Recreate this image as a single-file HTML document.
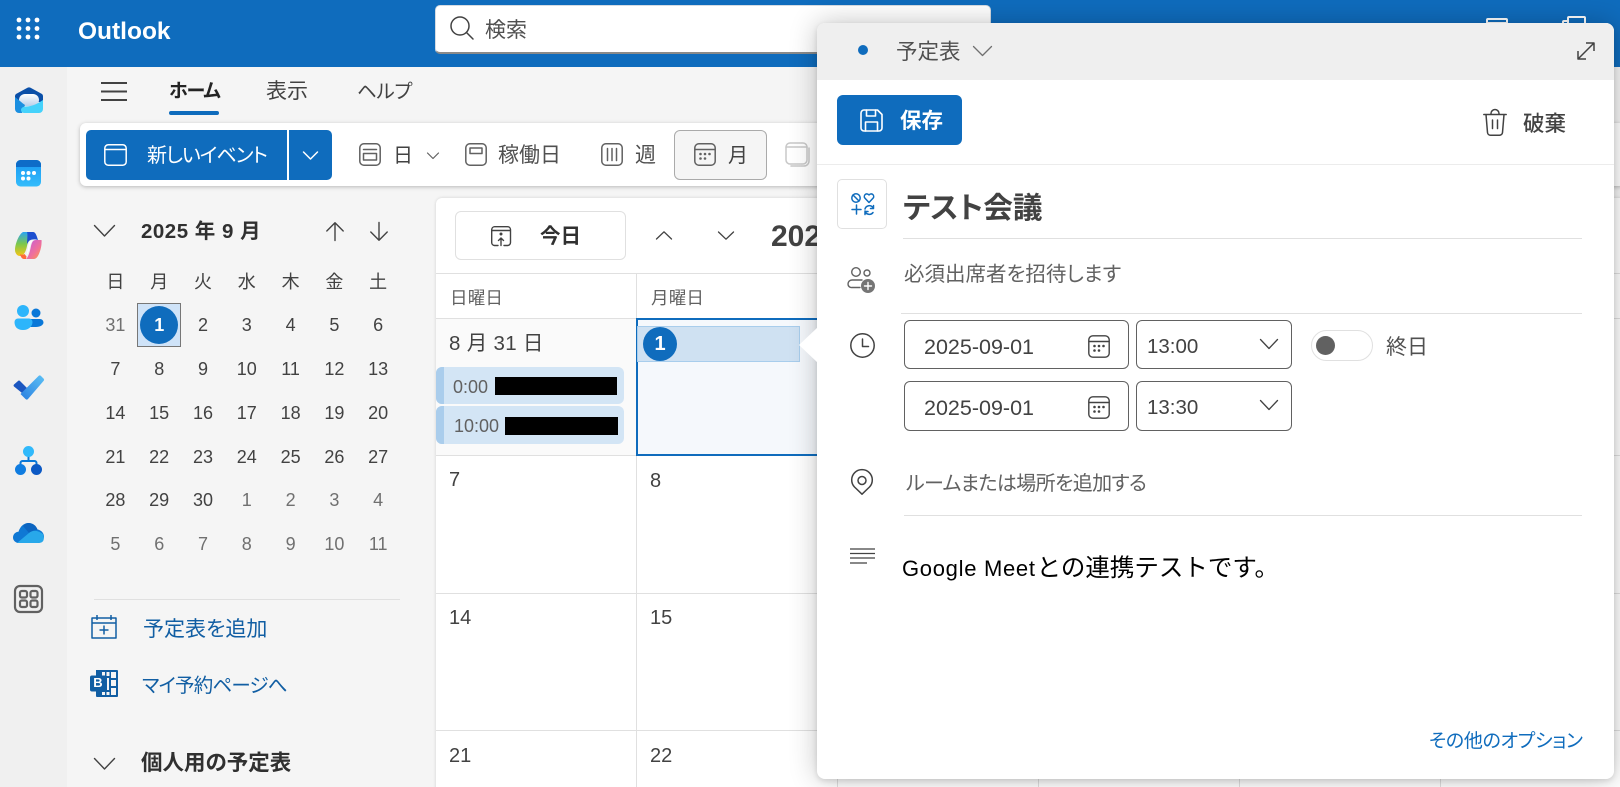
<!DOCTYPE html>
<html lang="ja">
<head>
<meta charset="utf-8">
<title>Outlook</title>
<style>
html,body{margin:0;padding:0;width:1620px;height:787px;overflow:hidden;background:#f5f5f5}
body{position:relative;font-family:"Liberation Sans","Noto Sans CJK JP",sans-serif;color:#424242;font-feature-settings:"palt"}
.a{position:absolute;box-sizing:border-box}
.t{position:absolute;white-space:nowrap;height:30px;line-height:30px}
svg{position:absolute;overflow:visible;fill:none;stroke:#424242;stroke-width:1.5;stroke-linecap:round;stroke-linejoin:round}
.g{stroke:#616161}
.w{stroke:#fff}
.n{stroke:none}
.cal{position:absolute;left:93.5px;top:260px;display:grid;grid-template-columns:repeat(7,43.8px);grid-auto-rows:43.8px;font-size:18px;color:#424242}
.cal span{display:flex;align-items:center;justify-content:center}
.cal .h{position:relative;top:-1px}
.cal .o{color:#707070}
.ln{position:absolute;background:#e0e0e0}
</style>
</head>
<body>
<!-- top bar -->
<div class="a" style="left:0;top:0;width:1620px;height:67px;background:#0f6cbd"></div>
<svg style="left:16px;top:17px" width="24" height="24" viewBox="0 0 24 24"><g fill="#fff" stroke="none"><circle cx="3" cy="3" r="2.4"/><circle cx="12" cy="3" r="2.4"/><circle cx="21" cy="3" r="2.4"/><circle cx="3" cy="11.5" r="2.4"/><circle cx="12" cy="11.5" r="2.4"/><circle cx="21" cy="11.5" r="2.4"/><circle cx="3" cy="20" r="2.4"/><circle cx="12" cy="20" r="2.4"/><circle cx="21" cy="20" r="2.4"/></g></svg>
<div class="t" style="left:78px;top:17px;font-size:24.5px;font-weight:700;color:#fff">Outlook</div>
<div class="a" style="left:435px;top:5px;width:556px;height:49px;background:#fff;border-radius:5px;border:1px solid #d5dbe2;border-bottom:2px solid #8a8a8a"></div>
<svg style="left:450px;top:16px" width="24" height="24" viewBox="0 0 24 24"><circle cx="10" cy="10" r="9"/><path d="M16.5 16.5L23 23"/></svg>
<div class="t" style="left:485px;top:16px;font-size:21px;color:#505050">検索</div>
<svg class="w" style="left:1486px;top:18px;stroke:#fff;stroke-width:2" width="22" height="10" viewBox="0 0 22 10"><path d="M1 10V2a1 1 0 0 1 1-1h18a1 1 0 0 1 1 1v8M1 5h20"/></svg>
<svg class="w" style="left:1562px;top:16px;stroke:#fff;stroke-width:2" width="24" height="10" viewBox="0 0 24 10"><path d="M6 10V2a1 1 0 0 1 1-1h15a1 1 0 0 1 1 1v8M1 10V6a1 1 0 0 1 1-1h4"/></svg>

<!-- left rail -->
<div class="a" style="left:0;top:67px;width:67px;height:720px;background:#f0f0f0"></div>
<svg style="left:14px;top:87px;stroke:none" width="30" height="26" viewBox="0 0 30 26"><defs>
<linearGradient id="pp" x1="0" y1="0" x2="0" y2="1"><stop offset="0" stop-color="#fff"/><stop offset="1" stop-color="#b9cfea"/></linearGradient>
<linearGradient id="cl" x1="0" y1="0" x2="0" y2="1"><stop offset="0" stop-color="#1a98f2"/><stop offset="1" stop-color="#34bcfb"/></linearGradient>
<linearGradient id="cp1" x1="0" y1="0" x2="0" y2="1"><stop offset="0" stop-color="#2aa4f4"/><stop offset=".5" stop-color="#7cc84a"/><stop offset="1" stop-color="#f5c518"/></linearGradient>
<linearGradient id="cp2" x1="0" y1="0" x2="1" y2="1"><stop offset="0" stop-color="#c05ae0"/><stop offset=".6" stop-color="#f0709a"/><stop offset="1" stop-color="#fba040"/></linearGradient>
<linearGradient id="td" x1="0" y1="1" x2="1" y2="0"><stop offset="0" stop-color="#2a7fe0"/><stop offset="1" stop-color="#5cc0f5"/></linearGradient>
</defs>
<path fill="#0a4fa8" d="M13 1a4 4 0 0 1 4 0L28 7a3 3 0 0 1 1 2v6H1V9a3 3 0 0 1 1-2Z"/>
<rect x="5" y="7" width="20" height="12" rx="6" fill="url(#pp)"/>
<path fill="#1b8fe0" d="M1 10C5 13 8 16 11 18L8 26H5a4 4 0 0 1-4-4Z"/>
<path fill="#45d2fb" d="M7 23c0-2 2-3.500 5-3.500 6 0 12-3 17-6.500V22a4 4 0 0 1-4 4H10a3 3 0 0 1-3-3Z"/></svg>
<svg style="left:16px;top:160px;stroke:none" width="25" height="27" viewBox="0 0 25 27"><rect width="25" height="26.500" rx="4.500" fill="url(#cl)"/><path fill="#0e6cc8" d="M4.500 0h16A4.500 4.500 0 0 1 25 4.500V7H0V4.500A4.500 4.500 0 0 1 4.500 0Z"/><g fill="#fff"><circle cx="7" cy="13" r="2"/><circle cx="12.500" cy="13" r="2"/><circle cx="18" cy="13" r="2"/><circle cx="7" cy="18.500" r="2"/><circle cx="12.500" cy="18.500" r="2"/></g></svg>
<svg style="left:15px;top:232px;stroke:none" width="27" height="27" viewBox="0 0 27 27"><path fill="url(#cp1)" d="M8 0h11l-2 1c-2 2-4 9-5 13-1 5-3 10-7 10-3 0-5-3-5-6C0 12 4 2 8 0Z"/><path fill="#1c4fd0" d="M12 0h6c2 0 3 2 4 5l1 3c-3-1-7-1-9 1l-2 3c0-4 1-9 0-12Z"/><path fill="url(#cp2)" d="M26.500 8H21c-3 0-4 2-5 6-1 5-2 9-4 12l-1 1h8c4 0 7-9 7.500-15 .1-2 .2-3 0-4Z"/><path fill="#ff6a3a" d="M5 22c1.500 1 3 1 4.500 0l2 2.500L11 27H9c-2 0-3.500-2.500-4-5Z"/><path fill="#fff" d="M15 9c-2 4-2 9-3.500 14 2.500-2 3-9 4.500-12 .5-1 1.500-2 2-3Z" opacity=".85"/></svg>
<svg style="left:14px;top:305px;stroke:none" width="30" height="25" viewBox="0 0 30 25"><circle cx="22" cy="8" r="4.500" fill="#0a78d8"/><path fill="#0a78d8" d="M14 14h12a3.500 3.500 0 0 1 3.500 3.500C29.500 20 26 22 22 22h-8Z"/><circle cx="9" cy="6" r="6" fill="#2db5fb"/><path fill="#2db5fb" d="M4 13.500h11a3.500 3.500 0 0 1 3.500 3.500c0 4-3.500 8-9.500 8S.5 21.500.5 17A3.500 3.500 0 0 1 4 13.500Z"/></svg>
<svg style="left:13px;top:375px;stroke:none" width="31" height="25" viewBox="0 0 31 25"><path fill="#1b56c0" d="M1 11.500a1.500 1.500 0 0 1 0-2L5 6a1.500 1.500 0 0 1 2 0l7 7-5 5Z"/><path fill="url(#td)" d="M12.500 24 7.500 19 25.500 1a1.800 1.800 0 0 1 2.500 0l2.500 2.500a1.800 1.800 0 0 1 0 2.500L15 24a1.800 1.800 0 0 1-2.500 0Z"/></svg>
<svg style="left:15px;top:446px;stroke:none" width="27" height="29" viewBox="0 0 27 29"><path fill="none" stroke="#0a78d8" stroke-width="2" d="M13.500 9v6M5.500 20v-3a2 2 0 0 1 2-2h12a2 2 0 0 1 2 2v3"/><circle cx="13.500" cy="5.500" r="5.500" fill="#30b9fb"/><circle cx="5.500" cy="23.500" r="5.500" fill="#0f7ce0"/><circle cx="21.500" cy="23.500" r="5.500" fill="#0c59c4"/></svg>
<svg style="left:13px;top:523px;stroke:none" width="31" height="20" viewBox="0 0 31 20"><path fill="#0f78d4" d="M6 20C2.500 20 0 17.500 0 14.500S2.300 9 5.500 8.800C7 3.500 11 0 15.500 0c4 0 7.500 2.500 9 6.500 3.500.5 6.500 3.500 6.500 7S28 20 25 20Z"/><path fill="#0c64c0" d="M10 3C11.500 1 13.500 0 15.500 0c4 0 7.500 2.500 9 6.500L20 8l-4 2Z"/><path fill="#28a8ea" d="M4 20 16 10Q22 5 30 11Q33 20 25 20Z"/></svg>
<svg style="left:14px;top:585px;stroke:#616161;stroke-width:2.200" width="29" height="28" viewBox="0 0 29 28"><rect x="1" y="1" width="27" height="26" rx="5"/><rect x="6" y="6" width="7" height="6.500" rx="1.800"/><rect x="16.500" y="6" width="7" height="6.500" rx="1.800"/><rect x="6" y="15.500" width="7" height="6.500" rx="1.800"/><rect x="16.500" y="15.500" width="7" height="6.500" rx="1.800"/></svg>

<!-- tabs -->
<svg style="left:101px;top:82px;stroke-linecap:butt;stroke-width:2" width="26" height="18" viewBox="0 0 26 18"><path d="M0 1h26M0 9.500h26M0 18h26"/></svg>
<div class="t" style="left:169px;top:77px;font-size:19px;letter-spacing:-1.200px;font-weight:700;color:#242424">ホーム</div>
<div class="a" style="left:169px;top:111px;width:50px;height:4px;border-radius:2px;background:#0f6cbd"></div>
<div class="t" style="left:266px;top:77px;font-size:21px;color:#424242">表示</div>
<div class="t" style="left:357px;top:77px;font-size:19.500px;letter-spacing:-.3px;color:#424242">ヘルプ</div>

<!-- ribbon -->
<div class="a" style="left:80px;top:123px;width:1545px;height:63px;background:#fff;border-radius:6px;box-shadow:0 1px 4px rgba(0,0,0,.25)"></div>
<div class="a" style="left:86px;top:130px;width:201px;height:50px;background:#0f6cbd;border-radius:5px 0 0 5px"></div>
<div class="a" style="left:289px;top:130px;width:43px;height:50px;background:#0f6cbd;border-radius:0 5px 5px 0"></div>
<svg class="w" style="left:104px;top:144px;stroke:#fff" width="23" height="22" viewBox="0 0 23 22"><rect x=".8" y=".8" width="21.400" height="20.400" rx="3.500"/><path d="M1 5.500h21"/></svg>
<div class="t" style="left:147px;top:141px;font-size:20px;letter-spacing:-1px;color:#fff">新しいイベント</div>
<svg style="left:303px;top:151px;stroke:#fff" width="15" height="9" viewBox="0 0 15 9"><path d="M.5 1l7 7 7-7"/></svg>
<svg class="g" style="left:359px;top:143px;stroke:#616161" width="22" height="23" viewBox="0 0 22 23"><rect x=".8" y=".8" width="20.400" height="21.400" rx="4"/><path d="M4.500 6.500h13"/><rect x="4.500" y="10.500" width="13" height="6.500"/></svg>
<div class="t" style="left:393px;top:141px;font-size:20px;color:#424242">日</div>
<svg style="left:427px;top:152px;stroke:#616161;stroke-width:1.200" width="12" height="7" viewBox="0 0 12 7"><path d="M.5 1l5.500 5.500L11.500 1"/></svg>
<svg style="left:465px;top:143px;stroke:#616161" width="22" height="23" viewBox="0 0 22 23"><rect x=".8" y=".8" width="20.400" height="21.400" rx="4"/><rect x="5" y="5" width="12" height="5.500"/></svg>
<div class="t" style="left:498px;top:141px;font-size:21px;color:#505050">稼働日</div>
<svg style="left:601px;top:143px;stroke:#616161" width="22" height="23" viewBox="0 0 22 23"><rect x=".8" y=".8" width="20.400" height="21.400" rx="4"/><path d="M6.500 5.500v12M11 5.500v12M15.500 5.500v12"/></svg>
<div class="t" style="left:635px;top:141px;font-size:21px;color:#505050">週</div>
<div class="a" style="left:674px;top:130px;width:93px;height:50px;background:#f5f5f5;border:1px solid #aaa;border-radius:6px"></div>
<svg style="left:694px;top:143px;stroke:#616161" width="22" height="23" viewBox="0 0 22 23"><rect x=".8" y=".8" width="20.400" height="21.400" rx="4"/><path d="M1 6.500h20"/><g fill="#616161" stroke="none"><circle cx="6.500" cy="11" r="1.300"/><circle cx="11" cy="11" r="1.300"/><circle cx="15.500" cy="11" r="1.300"/><circle cx="6.500" cy="15.500" r="1.300"/><circle cx="11" cy="15.500" r="1.300"/></g></svg>
<div class="t" style="left:728px;top:141px;font-size:20px;color:#424242">月</div>
<svg style="left:785px;top:142px;stroke:#c8c8c8;stroke-width:1.500" width="25" height="25" viewBox="0 0 25 25"><rect x="1" y="1" width="21" height="21" rx="4"/><path d="M1 5h21M24 6v13a5 5 0 0 1-5 5H6"/></svg>

<!-- mini calendar -->
<svg style="left:94px;top:225px;stroke-width:1.400" width="21" height="12" viewBox="0 0 21 12"><path d="M.5 .5L10.500 11 20.500 .5"/></svg>
<div class="t" style="left:141px;top:217px;font-size:20.500px;letter-spacing:.5px;font-weight:700;color:#303030">2025 年 9 月</div>
<svg style="left:326px;top:222px;stroke-width:1.400" width="18" height="19" viewBox="0 0 18 19"><path d="M9 18.500V.8M.8 9L9 .8 17.200 9"/></svg>
<svg style="left:370px;top:222px;stroke-width:1.400" width="18" height="19" viewBox="0 0 18 19"><path d="M9 .5v17.700M.8 10L9 18.200 17.200 10"/></svg>
<div class="a" style="left:137px;top:303px;width:44px;height:44px;background:#cfe3f8;border:1px solid #777"></div>
<div class="a" style="left:140px;top:306px;width:38px;height:38px;border-radius:50%;background:#0f6cbd"></div>
<div class="cal">
<span class="h">日</span><span class="h">月</span><span class="h">火</span><span class="h">水</span><span class="h">木</span><span class="h">金</span><span class="h">土</span>
<span class="o">31</span><span style="color:#fff;font-weight:700">1</span><span>2</span><span>3</span><span>4</span><span>5</span><span>6</span>
<span>7</span><span>8</span><span>9</span><span>10</span><span>11</span><span>12</span><span>13</span>
<span>14</span><span>15</span><span>16</span><span>17</span><span>18</span><span>19</span><span>20</span>
<span>21</span><span>22</span><span>23</span><span>24</span><span>25</span><span>26</span><span>27</span>
<span>28</span><span>29</span><span>30</span><span class="o">1</span><span class="o">2</span><span class="o">3</span><span class="o">4</span>
<span class="o">5</span><span class="o">6</span><span class="o">7</span><span class="o">8</span><span class="o">9</span><span class="o">10</span><span class="o">11</span>
</div>
<div class="ln" style="left:94px;top:599px;width:306px;height:1px"></div>
<svg style="left:91px;top:615px;stroke:#115ea3;stroke-linecap:butt" width="26" height="24" viewBox="0 0 26 24"><path d="M1 3h24v20H1ZM1 8h24M6 0v5M20 0v5M13 10.500v9M8.500 15h9"/></svg>
<div class="t" style="left:143px;top:615px;font-size:21px;color:#115ea3">予定表を追加</div>
<svg style="left:90px;top:670px;stroke:none" width="28" height="27" viewBox="0 0 28 27"><path fill="#115ea3" d="M7 0h20a1 1 0 0 1 1 1v25a1 1 0 0 1-1 1H7a1 1 0 0 1-1-1V0Z"/><g fill="#f5f5f5"><rect x="12" y="2" width="3" height="4"/><rect x="16.500" y="2" width="3" height="4"/><rect x="21" y="2" width="5" height="6"/><rect x="21" y="10" width="5" height="6"/><rect x="21" y="18" width="5" height="7"/><rect x="12" y="22" width="3" height="3"/><rect x="16.500" y="22" width="3" height="3"/></g><rect y="5.500" width="17" height="16" rx="2" fill="#115ea3"/><rect x="17" y="8" width="2" height="12" fill="#f5f5f5"/></svg>
<div class="t" style="left:86px;top:668px;width:24px;text-align:center;font-size:13px;line-height:30px;font-weight:700;color:#fff">B</div>
<div class="t" style="left:142px;top:671px;font-size:19.500px;letter-spacing:-.8px;color:#115ea3">マイ予約ページへ</div>
<svg style="left:94px;top:758px;stroke-width:1.400" width="21" height="12" viewBox="0 0 21 12"><path d="M.5 .5L10.500 11 20.500 .5"/></svg>
<div class="t" style="left:141px;top:748px;font-size:21.500px;font-weight:700;color:#303030">個人用の予定表</div>

<!-- calendar surface -->
<div class="a" style="left:436px;top:198px;width:1190px;height:600px;background:#fff;border-radius:6px 0 0 0;box-shadow:0 0 3px rgba(0,0,0,.15)"></div>
<div class="a" style="left:455px;top:211px;width:171px;height:49px;border:1px solid #e0e0e0;border-radius:6px;background:#fff"></div>
<svg style="left:491px;top:226px;stroke-width:1.400" width="20" height="20" viewBox="0 0 20 20"><path d="M7 19.500H3.500A3 3 0 0 1 .7 16.500V3.500A3 3 0 0 1 3.500.7h13a3 3 0 0 1 3 2.800v13a3 3 0 0 1-3 3H13M1 4.500h18M10 19.500v-7M7.500 14.500 10 12l2.500 2.500"/><circle cx="10" cy="8" r=".8" fill="#424242"/></svg>
<div class="t" style="left:540px;top:222px;font-size:20.500px;font-weight:700;color:#303030">今日</div>
<svg style="left:656px;top:231px;stroke-width:1.300" width="16" height="9" viewBox="0 0 16 9"><path d="M.5 8L8 .8 15.500 8"/></svg>
<svg style="left:718px;top:231px;stroke-width:1.300" width="16" height="9" viewBox="0 0 16 9"><path d="M.5 1L8 8.200 15.500 1"/></svg>
<div class="t" style="left:771px;top:222px;font-size:30px;font-weight:700;color:#424242">2025</div>

<div class="ln" style="left:436px;top:273px;width:1190px;height:1px"></div>
<div class="ln" style="left:436px;top:318px;width:1190px;height:1px"></div>
<div class="ln" style="left:436px;top:455px;width:1190px;height:1px"></div>
<div class="ln" style="left:436px;top:593px;width:1190px;height:1px"></div>
<div class="ln" style="left:436px;top:730px;width:1190px;height:1px"></div>
<div class="ln" style="left:636px;top:273px;width:1px;height:520px"></div>
<div class="ln" style="left:837px;top:273px;width:1px;height:520px"></div>
<div class="ln" style="left:1038px;top:273px;width:1px;height:520px"></div>
<div class="ln" style="left:1239px;top:273px;width:1px;height:520px"></div>
<div class="ln" style="left:1440px;top:273px;width:1px;height:520px"></div>
<div class="a" style="left:436px;top:319px;width:200px;height:136px;background:#fafafa"></div>
<div class="t" style="left:450px;top:283px;font-size:17.500px;color:#616161;letter-spacing:.2px">日曜日</div>
<div class="t" style="left:651px;top:283px;font-size:17.500px;color:#616161;letter-spacing:.2px">月曜日</div>
<div class="t" style="left:449px;top:329px;font-size:20.500px;letter-spacing:.3px;color:#424242">8 月 31 日</div>

<div class="a" style="left:436px;top:367px;width:188px;height:37px;background:#d3e5f5;border-radius:6px;overflow:hidden"><div class="a" style="left:0;top:0;width:8px;height:37px;background:#aacdec"></div></div>
<div class="t" style="left:453px;top:372px;font-size:18px;color:#616161">0:00</div>
<div class="a" style="left:495px;top:377px;width:122px;height:18px;background:#000"></div>
<div class="a" style="left:436px;top:406px;width:188px;height:38px;background:#d3e5f5;border-radius:6px;overflow:hidden"><div class="a" style="left:0;top:0;width:8px;height:38px;background:#aacdec"></div></div>
<div class="t" style="left:454px;top:411px;font-size:18px;color:#616161">10:00</div>
<div class="a" style="left:505px;top:417px;width:113px;height:18px;background:#000"></div>

<div class="a" style="left:636px;top:318px;width:210px;height:138px;background:#f5f8fc;border:2px solid #0f6cbd;border-right:0"></div>
<div class="a" style="left:637px;top:326px;width:163px;height:36px;background:#cfe1f2;border:1px solid #a8cdec"></div>
<div class="a" style="left:643px;top:327px;width:34px;height:34px;border-radius:50%;background:#0f6cbd"></div>
<div class="t" style="left:643px;top:329px;width:34px;text-align:center;font-size:20px;font-weight:700;color:#fff">1</div>

<div class="t" style="left:449px;top:465px;font-size:20px">7</div>
<div class="t" style="left:650px;top:466px;font-size:20px">8</div>
<div class="t" style="left:449px;top:603px;font-size:20px">14</div>
<div class="t" style="left:650px;top:603px;font-size:20px">15</div>
<div class="t" style="left:449px;top:741px;font-size:20px">21</div>
<div class="t" style="left:650px;top:741px;font-size:20px">22</div>

<!-- dialog -->
<div class="a" style="left:817px;top:23px;width:797px;height:756px;background:#fff;border-radius:8px;box-shadow:0 0 28px rgba(0,0,0,.24),0 2px 6px rgba(0,0,0,.12)"></div>
<svg style="left:799px;top:327px;stroke:none" width="19" height="36" viewBox="0 0 19 36"><path fill="#fff" d="M19 0L0 18l19 18Z"/></svg>
<div class="a" style="left:817px;top:23px;width:797px;height:57px;background:#efefef;border-radius:8px 8px 0 0"></div>
<div class="a" style="left:858px;top:45px;width:10px;height:10px;border-radius:50%;background:#0f6cbd"></div>
<div class="t" style="left:896px;top:37px;font-size:21.500px;color:#505050">予定表</div>
<svg style="left:973px;top:46px;stroke:#707070;stroke-width:1.300" width="19" height="10" viewBox="0 0 19 10"><path d="M.5 .5L9.500 9.500 18.500 .5"/></svg>
<svg style="left:1577px;top:42px;stroke-linecap:butt" width="18" height="18" viewBox="0 0 18 18"><path d="M1 17L17 1M9 1h8v8M1 9v8h8"/></svg>

<div class="a" style="left:837px;top:95px;width:125px;height:50px;background:#0f6cbd;border-radius:6px"></div>
<svg style="left:860px;top:109px;stroke:#fff;stroke-width:1.600" width="23" height="23" viewBox="0 0 23 23"><path d="M1 4a3 3 0 0 1 3-3h13.500L22 5.500V19a3 3 0 0 1-3 3H4a3 3 0 0 1-3-3Z"/><path d="M5.500 22v-9h12v9M6.500 1v6h9V1"/></svg>
<div class="t" style="left:900px;top:106px;font-size:21.500px;font-weight:700;color:#fff">保存</div>
<svg style="left:1483px;top:110px;stroke-width:1.500" width="24" height="26" viewBox="0 0 24 26"><path d="M.8 4.500h22.400M8 4.500V3.500a3.500 3.500 0 0 1 8 0v1M3 4.500l1.500 18a3 3 0 0 0 3 2.700h9a3 3 0 0 0 3-2.700l1.500-18M9.500 10v8.500M14.500 10v8.500"/></svg>
<div class="t" style="left:1523px;top:109px;font-size:21.500px;font-weight:500;color:#424242">破棄</div>
<div class="ln" style="left:817px;top:164px;width:797px;height:1px;background:#ececec"></div>

<div class="a" style="left:837px;top:179px;width:50px;height:50px;border:1px solid #e0e0e0;border-radius:5px"></div>
<svg style="left:851px;top:193px;stroke:#0f6cbd;stroke-width:1.500" width="24" height="23" viewBox="0 0 24 23"><circle cx="5" cy="5" r="4.200"/><path d="M2 2l6 6M1 16.500h9M5.500 12v9M18 9.500l-4.200-4.500a2.500 2.500 0 0 1 4.200-3 2.500 2.500 0 0 1 4.200 3ZM14 16a4.500 4.500 0 0 1 7.500-2l1 1M14 18a4.500 4.500 0 0 0 8 1.500M22.500 12.500v3h-3M14 21.500v-3h3"/></svg>
<div class="t" style="left:903px;top:194px;font-size:29.700px;font-weight:700;color:#424242">テスト会議</div>
<div class="ln" style="left:903px;top:238px;width:679px;height:1px"></div>

<svg style="left:847px;top:267px;stroke:#616161;stroke-width:1.400" width="28" height="26" viewBox="0 0 28 26"><circle cx="9" cy="5" r="4.300"/><circle cx="20" cy="6" r="3"/><path d="M15 13H5a4 4 0 0 0-4 4 3.500 3.500 0 0 0 4 3.500h8"/><circle cx="21" cy="19" r="7" fill="#757575" stroke="none"/><path stroke="#fff" d="M21 15.500v7M17.500 19h7"/></svg>
<div class="t" style="left:904px;top:260px;font-size:20.500px;color:#616161">必須出席者を招待します</div>
<div class="ln" style="left:901px;top:313px;width:681px;height:1px"></div>

<svg style="left:850px;top:333px" width="25" height="25" viewBox="0 0 25 25"><circle cx="12.500" cy="12.500" r="11.700"/><path d="M12.500 6v7.500h6"/></svg>
<div class="a" style="left:904px;top:320px;width:225px;height:49px;border:1px solid #616161;border-radius:6px"></div>
<div class="t" style="left:924px;top:332px;font-size:21.500px;color:#424242">2025-09-01</div>
<svg style="left:1088px;top:335px;stroke-width:1.400" width="22" height="23" viewBox="0 0 22 23"><rect x=".8" y=".8" width="20.400" height="21.400" rx="4"/><path d="M1 6.500h20"/><g fill="#424242" stroke="none"><circle cx="6.500" cy="11" r="1.300"/><circle cx="11" cy="11" r="1.300"/><circle cx="15.500" cy="11" r="1.300"/><circle cx="6.500" cy="15.500" r="1.300"/><circle cx="11" cy="15.500" r="1.300"/></g></svg>
<div class="a" style="left:1136px;top:320px;width:156px;height:49px;border:1px solid #616161;border-radius:6px"></div>
<div class="t" style="left:1147px;top:332px;font-size:20.500px;color:#424242">13:00</div>
<svg style="left:1260px;top:339px;stroke-width:1.300" width="18" height="10" viewBox="0 0 18 10"><path d="M.5 .5L9 9.500 17.500 .5"/></svg>
<div class="a" style="left:1311px;top:330px;width:62px;height:31px;border:1px solid #e0e0e0;border-radius:16px"></div>
<div class="a" style="left:1316px;top:336px;width:19px;height:19px;border-radius:50%;background:#616161"></div>
<div class="t" style="left:1386px;top:333px;font-size:21px;color:#505050">終日</div>

<div class="a" style="left:904px;top:381px;width:225px;height:50px;border:1px solid #616161;border-radius:6px"></div>
<div class="t" style="left:924px;top:393px;font-size:21.500px;color:#424242">2025-09-01</div>
<svg style="left:1088px;top:396px;stroke-width:1.400" width="22" height="23" viewBox="0 0 22 23"><rect x=".8" y=".8" width="20.400" height="21.400" rx="4"/><path d="M1 6.500h20"/><g fill="#424242" stroke="none"><circle cx="6.500" cy="11" r="1.300"/><circle cx="11" cy="11" r="1.300"/><circle cx="15.500" cy="11" r="1.300"/><circle cx="6.500" cy="15.500" r="1.300"/><circle cx="11" cy="15.500" r="1.300"/></g></svg>
<div class="a" style="left:1136px;top:381px;width:156px;height:50px;border:1px solid #616161;border-radius:6px"></div>
<div class="t" style="left:1147px;top:393px;font-size:20.500px;color:#424242">13:30</div>
<svg style="left:1260px;top:400px;stroke-width:1.300" width="18" height="10" viewBox="0 0 18 10"><path d="M.5 .5L9 9.500 17.500 .5"/></svg>

<svg style="left:851px;top:470px" width="22" height="25" viewBox="0 0 22 25"><path d="M11 24.200L3.500 17a10.300 10.300 0 1 1 15 0Z"/><circle cx="11" cy="10.500" r="4"/></svg>
<div class="t" style="left:906px;top:469px;font-size:20px;letter-spacing:-.64px;color:#616161">ルームまたは場所を追加する</div>
<div class="ln" style="left:904px;top:515px;width:678px;height:1px"></div>

<svg style="left:850px;top:548px;stroke-linecap:butt;stroke-width:1.300" width="25" height="16" viewBox="0 0 25 16"><path d="M0 1h25M0 5.500h25M0 10h25M0 15h17"/></svg>
<div class="t" style="left:902px;top:554px;font-size:24.500px;color:#000;font-feature-settings:normal"><span style="font-size:22px;letter-spacing:.7px;margin-right:1px">Google Meet</span>との連携テストです。</div>
<div class="t" style="left:1429px;top:727px;font-size:19px;letter-spacing:-.3px;color:#0f6cbd">その他のオプション</div>
</body>
</html>
